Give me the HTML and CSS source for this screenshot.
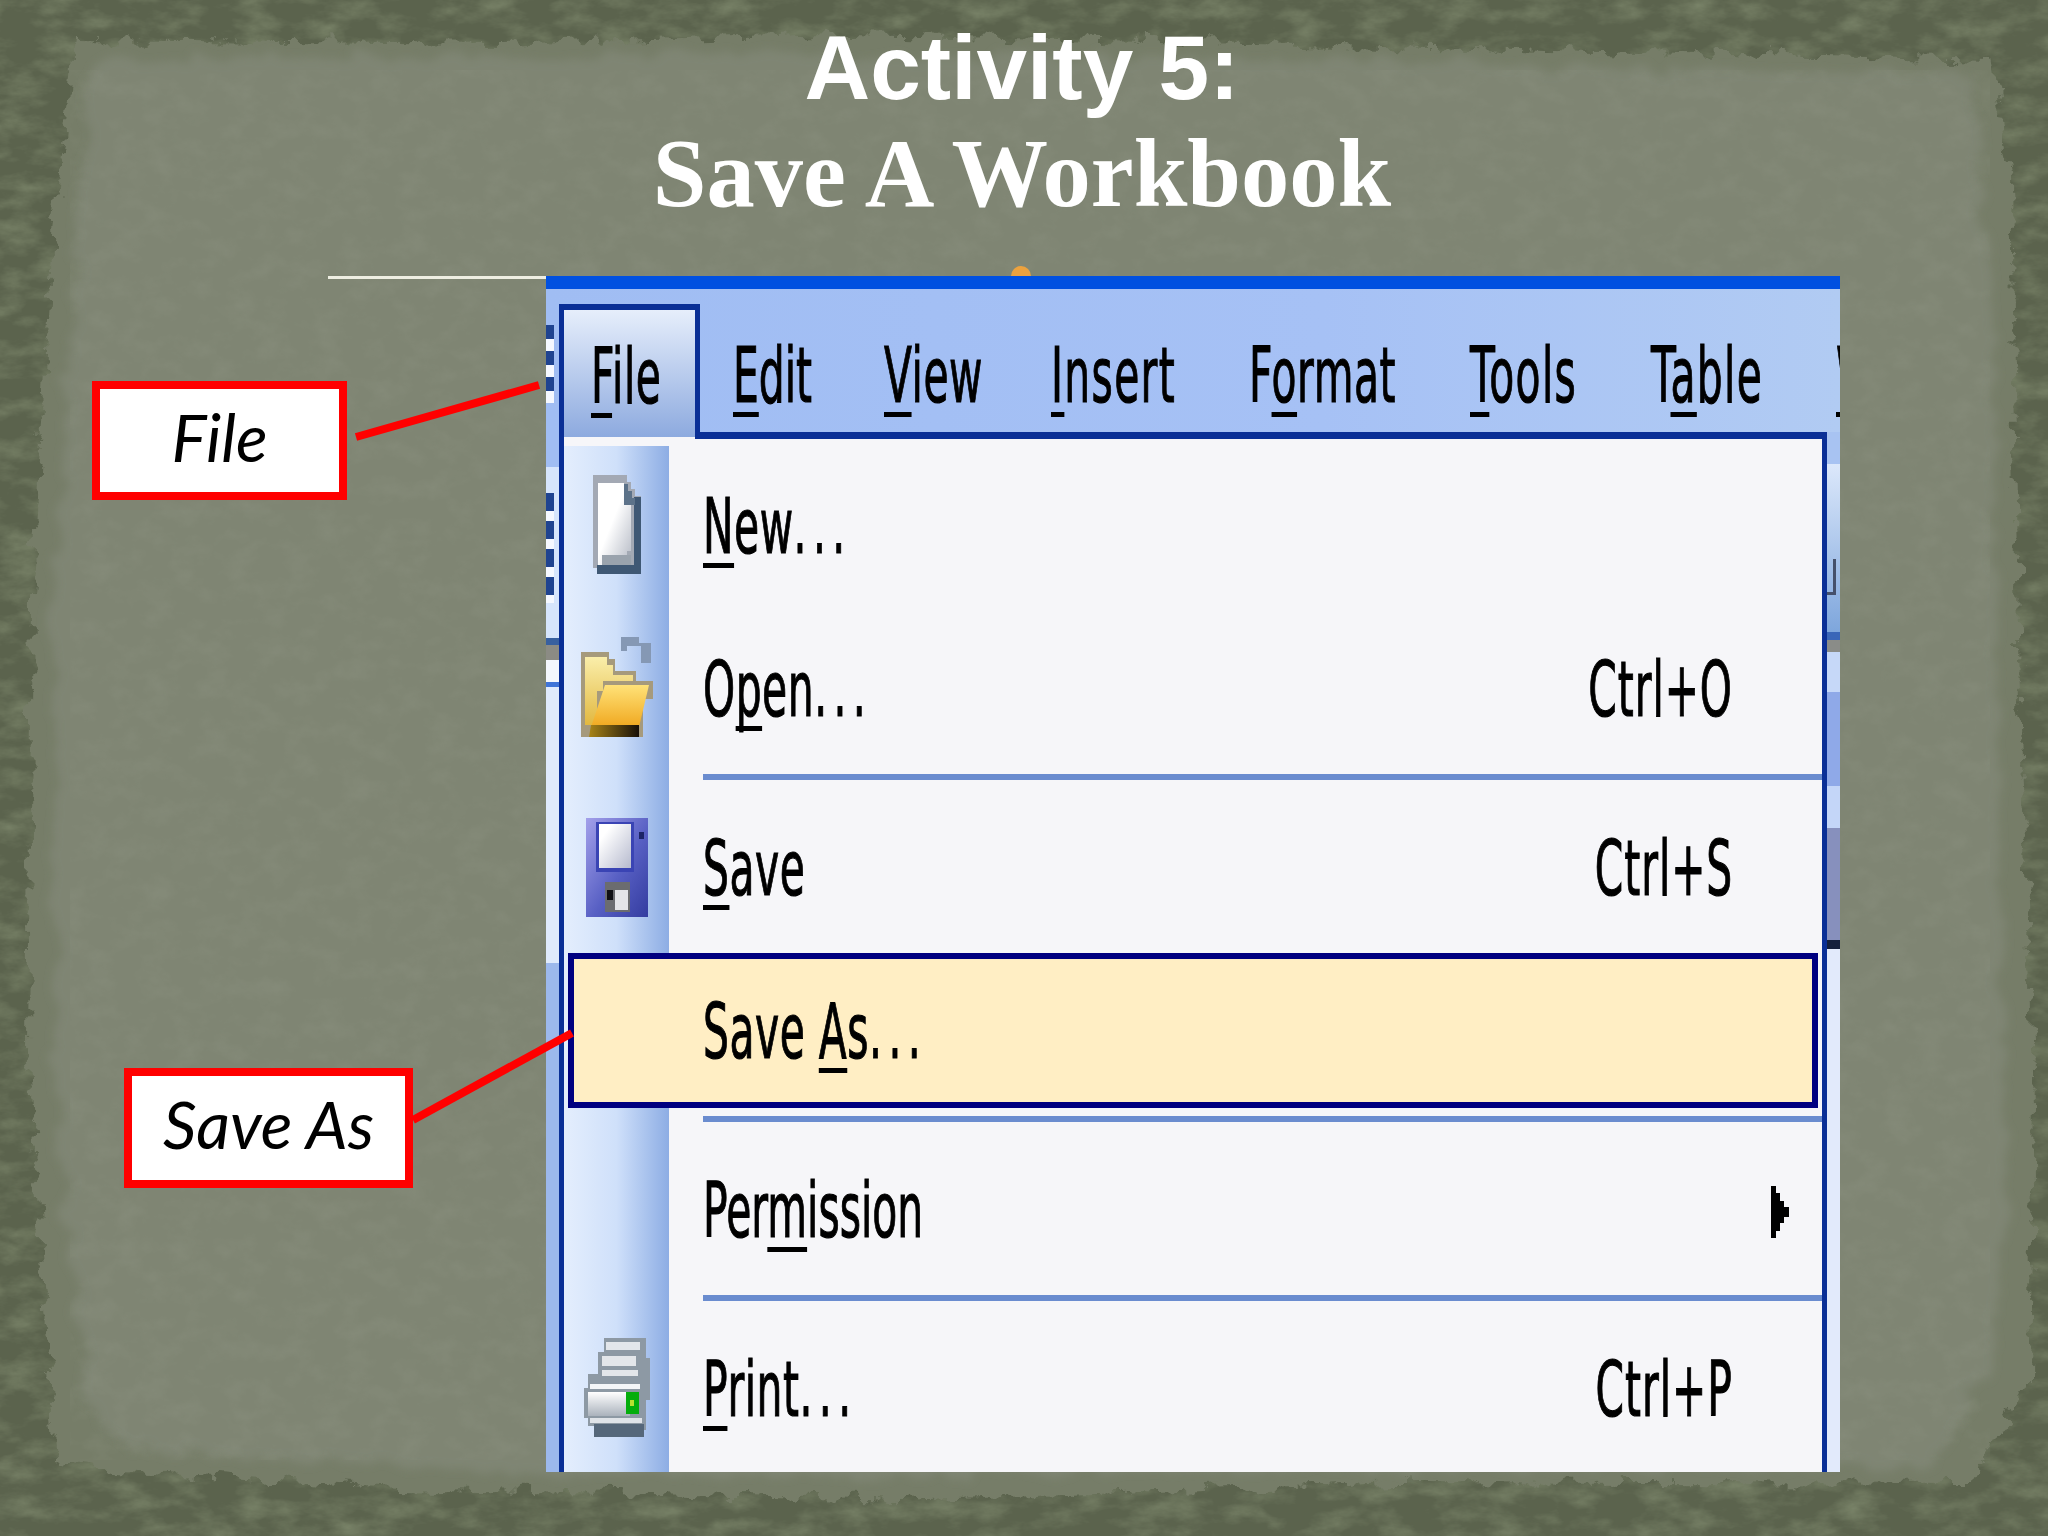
FILE: index.html
```html
<!DOCTYPE html>
<html lang="en">
<head>
<meta charset="utf-8">
<title>Activity 5: Save A Workbook</title>
<link rel="stylesheet" href="styles.css">
</head>
<body>
<main class="slide">
  <svg class="backdrop" viewBox="0 0 2048 1536" aria-hidden="true">
    <defs>
      <filter id="torn" x="-5%" y="-5%" width="110%" height="110%">
        <feTurbulence type="fractalNoise" baseFrequency="0.05" numOctaves="5" seed="7" result="n"/>
        <feDisplacementMap in="SourceGraphic" in2="n" scale="26" xChannelSelector="R" yChannelSelector="G"/>
      </filter>
      <filter id="tornSoft" x="-5%" y="-5%" width="110%" height="110%">
        <feTurbulence type="fractalNoise" baseFrequency="0.03" numOctaves="4" seed="21" result="n"/>
        <feDisplacementMap in="SourceGraphic" in2="n" scale="30" xChannelSelector="R" yChannelSelector="G"/>
        <feGaussianBlur stdDeviation="4"/>
      </filter>
      <filter id="grainDark" x="0" y="0" width="100%" height="100%">
        <feTurbulence type="fractalNoise" baseFrequency="0.025 0.05" numOctaves="5" seed="11"/>
        <feColorMatrix values="0 0 0 0 .22  0 0 0 0 .26  0 0 0 0 .16  0 0 0 1.5 -.62"/>
      </filter>
      <filter id="grainSoft" x="0" y="0" width="100%" height="100%">
        <feTurbulence type="fractalNoise" baseFrequency="0.035 0.05" numOctaves="4" seed="3"/>
        <feColorMatrix values="0 0 0 0 .38  0 0 0 0 .41  0 0 0 0 .33  0 0 0 1 -.42"/>
      </filter>
    </defs>
    <rect width="2048" height="1536" fill="#5b634d"/>
    <rect width="2048" height="1536" filter="url(#grainDark)"/>
    <polygon filter="url(#torn)" fill="#767d68" points="74,40 500,44 800,34 1300,44 1992,60 2012,180 2020,700 2034,1100 2030,1380 1968,1484 1400,1482 900,1500 400,1488 120,1470 56,1462 28,1050 32,600 52,250"/>
    <polygon filter="url(#tornSoft)" fill="#7f8573" points="96,60 600,54 1300,60 1972,76 1992,300 1998,800 2008,1200 1990,1360 1934,1466 1300,1470 600,1478 130,1450 82,1400 54,1050 54,600 74,280"/>
    <rect x="70" y="70" width="1920" height="1390" filter="url(#grainSoft)" opacity=".28"/>
  </svg>

  <h1 class="title">
    <span class="title-top">Activity 5:</span>
    <span class="title-sub">Save A Workbook</span>
  </h1>

  <div class="rule"></div>
  <div class="dot"></div>

  <section class="shot">
    <div class="titlebar"></div>
    <nav class="menubar">
      <div class="grip"></div>
      <div class="tab"><span class="t"><u>F</u>ile</span></div>
      <div class="gap"></div>
      <div class="mi"><span class="t tight"><u>E</u>dit</span></div>
      <div class="mi"><span class="t"><u>V</u>iew</span></div>
      <div class="mi"><span class="t wide"><u>I</u>nsert</span></div>
      <div class="mi"><span class="t">F<u>o</u>rmat</span></div>
      <div class="mi"><span class="t wide"><u>T</u>ools</span></div>
      <div class="mi"><span class="t wide">T<u>a</u>ble</span></div>
      <div class="mi"><span class="t"><u>W</u>indow</span></div>
    </nav>
    <div class="work">
      <div class="strip strip-left">
        <div class="s-blue"></div>
        <div class="s-grip"></div>
        <div class="s-navy"></div>
        <div class="s-gray"></div>
        <div class="s-white"></div>
        <div class="s-line"></div>
        <div class="s-pale"></div>
        <div class="s-fill"></div>
      </div>

      <div class="panel">
        <div class="row">
          <div class="gutter ico-new">
            <svg class="icon" viewBox="0 0 48 99" preserveAspectRatio="none" aria-hidden="true">
              <defs><linearGradient id="pg" x1="0" y1="0" x2="1" y2="1"><stop offset=".45" stop-color="#fff"/><stop offset="1" stop-color="#b4b9c4"/></linearGradient></defs>
              <path d="M0 0H34V7H38V14H42V21H48V99H4V93H0Z" fill="#a3a9b4"/>
              <path d="M4 90H48V99H4ZM41 22H48V99H41Z" fill="#3f5874"/>
              <path d="M5 8H31V30H38V76H34V82H9V90H5Z" fill="url(#pg)"/>
              <path d="M9 80H38V90H9Z" fill="#9aa3ad"/>
              <path d="M31 9H35V16H39V23H42V30H31Z" fill="#5c7289"/>
            </svg>
          </div>
          <span class="t label label-first"><u>N</u>ew<span class="dots">...</span></span>
        </div>

        <div class="row">
          <div class="gutter ico-open">
            <svg class="icon" viewBox="0 0 72 100" preserveAspectRatio="none" aria-hidden="true">
              <defs>
                <linearGradient id="fb" x1="0" y1="0" x2="0" y2="1"><stop offset="0" stop-color="#faeeaa"/><stop offset="1" stop-color="#e2b840"/></linearGradient>
                <linearGradient id="ff" x1="0" y1="0" x2="0" y2="1"><stop offset="0" stop-color="#ffe278"/><stop offset="1" stop-color="#f0a820"/></linearGradient>
                <linearGradient id="fs" x1="0" y1="0" x2="1" y2="0"><stop offset="0" stop-color="#a88418"/><stop offset="1" stop-color="#181008"/></linearGradient>
              </defs>
              <path d="M40 6V0H58V6H70V26H60V9H46V14H40Z" fill="#8598b4"/>
              <path d="M0 15H28V22H34V34H55V44H72V62H62V100H0Z" fill="#a69a7c"/>
              <path d="M4 20H26V28H32V38H52V44H22V54H16V88H4Z" fill="url(#fb)"/>
              <path d="M24 48H68L58 90H10Z" fill="url(#ff)"/>
              <path d="M10 88H58V100H8Z" fill="url(#fs)"/>
            </svg>
          </div>
          <span class="t label">O<u>p</u>en<span class="dots">...</span></span>
          <span class="t key">Ctrl+O</span>
        </div>

        <div class="sep"></div>

        <div class="row">
          <div class="gutter ico-save">
            <svg class="icon" viewBox="0 0 62 99" preserveAspectRatio="none" aria-hidden="true">
              <defs>
                <linearGradient id="db" x1="0" y1="0" x2="1" y2="1"><stop offset="0" stop-color="#a3a0ea"/><stop offset=".55" stop-color="#5860c4"/><stop offset="1" stop-color="#343ca0"/></linearGradient>
                <linearGradient id="dl" x1="0" y1="0" x2="1" y2="1"><stop offset=".2" stop-color="#fff"/><stop offset="1" stop-color="#b6bace"/></linearGradient>
              </defs>
              <rect width="62" height="99" fill="url(#db)"/>
              <rect x="10" y="4" width="38" height="50" fill="#3a44b4"/>
              <rect x="13" y="6" width="32" height="44" fill="url(#dl)"/>
              <rect x="53" y="14" width="5" height="7" fill="#1c2466"/>
              <rect x="19" y="64" width="25" height="30" fill="#6b6c70"/>
              <rect x="29" y="72" width="13" height="20" fill="#e4e4e8"/>
              <rect x="21" y="72" width="6" height="10" fill="#101014"/>
            </svg>
          </div>
          <span class="t label"><u>S</u>ave</span>
          <span class="t key">Ctrl+S</span>
        </div>

        <div class="active">
          <span class="t label">Save <u>A</u>s<span class="dots">...</span></span>
        </div>

        <div class="sep sep-tight"></div>

        <div class="row">
          <div class="gutter"></div>
          <span class="t label tight">Per<u>m</u>ission</span>
          <svg class="arrow" viewBox="0 0 18 52" aria-hidden="true"><path d="M0 0H5V7H9V15H13V21H18V31H13V37H9V45H5V52H0Z"/></svg>
        </div>

        <div class="sep"></div>

        <div class="row">
          <div class="gutter ico-print">
            <svg class="icon" viewBox="0 0 66 99" preserveAspectRatio="none" aria-hidden="true">
              <defs><linearGradient id="pw" x1="0" y1="0" x2="0" y2="1"><stop offset="0" stop-color="#fff"/><stop offset="1" stop-color="#aab2bc"/></linearGradient></defs>
              <path d="M20 0H62V20H66V62H62V92H60V99H10V88H4V80H0V50H4V36H14V14H20Z" fill="#8d99a4"/>
              <path d="M22 4H56V12H22ZM18 18H52V28H18ZM18 32H54V38H18Z" fill="#e3e6ea"/>
              <rect x="6" y="46" width="50" height="5" fill="#f4f6f8"/>
              <rect x="4" y="54" width="42" height="24" fill="url(#pw)"/>
              <rect x="42" y="54" width="13" height="22" fill="#04ad0c"/>
              <rect x="46" y="62" width="4" height="6" fill="#b8e030"/>
              <rect x="10" y="86" width="50" height="13" fill="#55677a"/>
              <rect x="6" y="80" width="52" height="5" fill="#dfe3e8"/>
            </svg>
          </div>
          <span class="t label"><u>P</u>rint<span class="dots">...</span></span>
          <span class="t key">Ctrl+P</span>
        </div>
      </div>

      <div class="strip strip-right">
        <div class="r-blue"></div>
        <div class="r-pale"><div class="r-glyph"></div></div>
        <div class="r-line"></div>
        <div class="r-gray"></div>
        <div class="r-white"></div>
        <div class="r-mid"></div>
        <div class="r-white2"></div>
        <div class="r-slate"></div>
        <div class="r-dark"></div>
        <div class="r-fill"></div>
      </div>
    </div>
  </section>

  <div class="callout callout-file">File</div>
  <div class="callout callout-saveas">Save As</div>
  <svg class="leaders" viewBox="0 0 2048 1536" aria-hidden="true">
    <line x1="356" y1="437" x2="539" y2="385"/>
    <line x1="413" y1="1120" x2="572" y2="1033"/>
  </svg>
</main>
</body>
</html>
```

FILE: styles.css
```css
* { box-sizing: border-box; }

html, body {
  margin: 0;
  padding: 0;
  background: #5b634d;
}

.slide {
  position: relative;
  width: 2048px;
  height: 1536px;
  overflow: hidden;
}

.backdrop {
  position: absolute;
  inset: 0;
  width: 2048px;
  height: 1536px;
  display: block;
}

.title {
  position: relative;
  margin: 0;
  padding: 15px 4px 0 0;
  color: #fff;
  text-align: center;
  font-weight: 700;
}

.title-top,
.title-sub {
  display: block;
  white-space: nowrap;
}

.title-top {
  font: 700 91px/106px "Liberation Sans", Arial, sans-serif;
}

.title-sub {
  font: 700 96.5px/105px "Liberation Serif", "Times New Roman", serif;
}

.rule {
  position: absolute;
  left: 328px;
  top: 276px;
  width: 240px;
  height: 3px;
  background: #eeeee2;
}

.dot {
  position: absolute;
  left: 1011px;
  top: 266px;
  width: 20px;
  height: 20px;
  border-radius: 50%;
  background: #eca23e;
}

/* pasted Office menu screenshot */
.shot {
  position: absolute;
  left: 546px;
  top: 276px;
  width: 1294px;
  height: 1196px;
  overflow: hidden;
  display: flex;
  flex-direction: column;
  background: #a4c0f4;
  color: #000;
  font-family: "DejaVu Sans", Verdana, sans-serif;
}

.titlebar {
  flex: none;
  height: 13px;
  background: #0050e0;
}

.menubar {
  flex: none;
  position: relative;
  height: 143px;
  display: grid;
  grid-template-columns: 13px 141px 33px 151px 167px 198px 221px 181px 185px 1fr;
  background: linear-gradient(to right, #a0bdf3 0%, #a6c1f5 60%, #b1cbf3 100%);
}

.grip {
  margin: 36px 5px 29px 0;
  background: repeating-linear-gradient(to bottom, #1f4390 0 14px, #f5f8ff 14px 26px);
}

.tab {
  position: relative;
  z-index: 1;
  margin: 15px 0 -7px;
  padding: 27px 0 0 27px;
  border: solid #0a2f96;
  border-width: 6px 5px 0;
  background: linear-gradient(to bottom, #e6eefb 0, #8daadf 127px, #f6f6f9 127px);
}

.gap {
  min-width: 0;
}

.mi {
  padding-top: 47px;
  min-width: 0;
}

.t {
  display: inline-block;
  font-size: 77px;
  line-height: 80px;
  white-space: nowrap;
  letter-spacing: 1px;
  -webkit-text-stroke: 1.2px #000;
  transform: scaleX(.53);
  transform-origin: left center;
}

.t.wide { letter-spacing: 2.5px; }
.t.tight { letter-spacing: 0; }

.t u {
  text-decoration: underline 5px;
  text-underline-offset: 10px;
  text-decoration-skip-ink: none;
}

.dots { letter-spacing: 12px; }

.work {
  flex: 1;
  min-height: 0;
  display: flex;
}

.strip {
  flex: none;
  display: flex;
  flex-direction: column;
}

.strip-left { width: 13px; }
.strip-right { width: 13px; }

.s-blue { height: 35px; background: #a0bdf3; }
.s-grip {
  height: 171px;
  background:
    repeating-linear-gradient(to bottom, #1f4390 0 18px, #f5f8ff 18px 28px) left 26px / 8px 110px no-repeat,
    #d6e5fc;
}
.s-navy { height: 7px; background: #38609f; }
.s-gray { height: 15px; background: #8b8b84; }
.s-white { height: 22px; background: #f4f7fd; }
.s-line { height: 5px; background: #3f74d8; }
.s-pale { height: 276px; background: #dfeafc; }
.s-fill { flex: 1; background: #9cb8ec; }

.r-blue { height: 32px; background: #a8c3f2; }
.r-pale {
  height: 168px;
  padding-top: 95px;
  background: linear-gradient(to bottom, #dce8fb, #7ea6dc);
}
.r-glyph {
  width: 9px;
  height: 36px;
  border: solid #45506a;
  border-width: 0 3px 3px 0;
}
.r-line { height: 8px; background: #3a66b8; }
.r-gray { height: 12px; background: #8a8c88; }
.r-white { height: 40px; background: #c6d8f8; }
.r-mid { height: 94px; background: #8fa9e8; }
.r-white2 { height: 42px; background: #c4d6f8; }
.r-slate { height: 112px; background: #8790bd; }
.r-dark { height: 9px; background: #15203c; }
.r-fill { flex: 1; background: #e2eafb; }

.panel {
  flex: 1;
  min-width: 0;
  position: relative;
  padding-top: 3px;
  border: solid #0a2f96;
  border-width: 7px 5px 0;
  background:
    linear-gradient(to right, #e4eefd, #cfe0fa 50%, #8dade4) 0 7px / 105px 100% no-repeat,
    #f6f6f9;
}

.row {
  display: flex;
  align-items: flex-start;
  height: 159px;
  padding-right: 33px;
}

.gutter {
  flex: none;
  width: 105px;
  margin-right: 34px;
  display: flex;
  justify-content: center;
}

.ico-new { padding-top: 33px; }
.ico-new .icon { width: 48px; height: 99px; }
.ico-open { padding-top: 36px; }
.ico-open .icon { width: 72px; height: 100px; }
.ico-save { padding-top: 38px; }
.ico-save .icon { width: 62px; height: 99px; }
.ico-print { padding-top: 37px; }
.ico-print .icon { width: 66px; height: 99px; }

.icon { display: block; }

.label {
  flex: none;
  margin-top: 49px;
}

.label-first { margin-top: 45px; }

.key {
  margin-top: 49px;
  margin-left: auto;
  margin-right: 56px;
  letter-spacing: 1.8px;
  transform-origin: right center;
}

.arrow {
  flex: none;
  width: 18px;
  height: 52px;
  margin: 64px 0 0 auto;
}

.sep {
  height: 6px;
  margin: 14px 0 0 139px;
  background: #6a8ccf;
}

.sep-tight { margin-top: 8px; }

.active {
  position: relative;
  height: 155px;
  margin: 14px 4px 0 4px;
  padding-left: 129px;
  border: 6px solid #000080;
  background: #ffeec4;
}

.active .label { margin-top: 33px; }

/* callouts drawn on the slide */
.callout {
  position: absolute;
  display: flex;
  align-items: center;
  justify-content: center;
  padding-bottom: 8px;
  border: 8px solid #f00;
  background: #fff;
  color: #000;
  font: italic 400 66px/1 Lato, "Open Sans", sans-serif;
}

.callout-file {
  left: 92px;
  top: 381px;
  width: 255px;
  height: 119px;
}

.callout-saveas {
  left: 124px;
  top: 1068px;
  width: 289px;
  height: 120px;
}

.leaders {
  position: absolute;
  inset: 0;
  width: 2048px;
  height: 1536px;
  pointer-events: none;
}

.leaders line {
  stroke: #f00;
  stroke-width: 8;
}
```
